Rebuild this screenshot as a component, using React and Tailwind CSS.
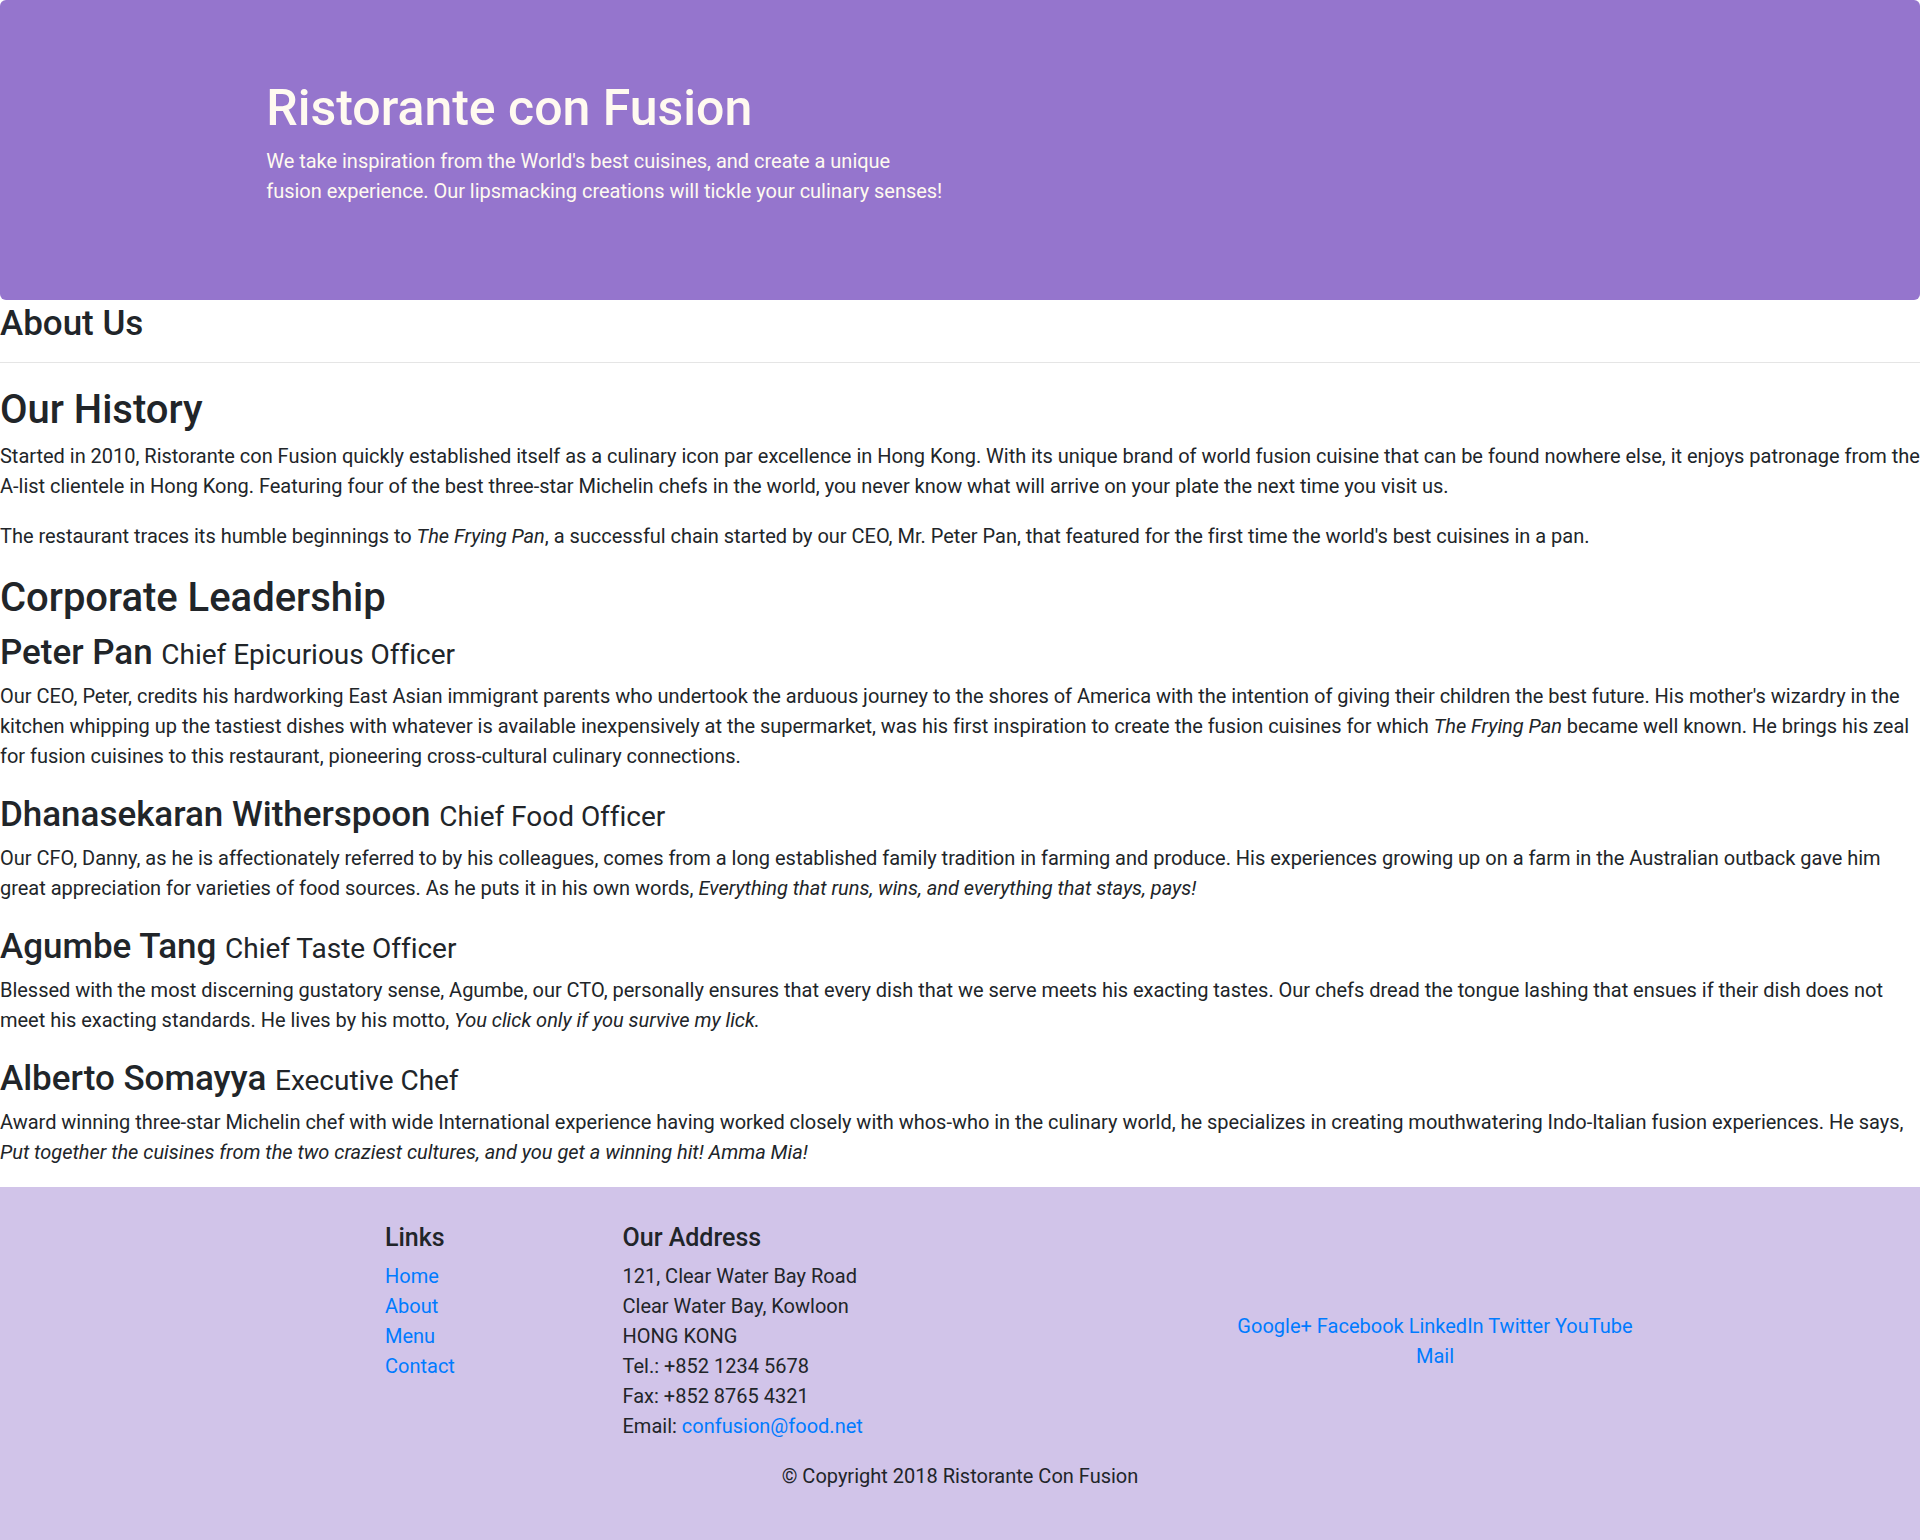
function Leader({ name, title, children }) {
  return (
    <>
      <h3 className="text-[35px] font-medium leading-[1.2] pt-[3px] mb-[7px]">
        {name} <small className="text-[28px] font-normal">{title}</small>
      </h3>
      <p className="mb-[20px]">{children}</p>
    </>
  );
}

export default function App() {
  return (
    <div className="font-['Roboto','Liberation_Sans',sans-serif] text-[20px] leading-[30px] text-[#212529] bg-white min-h-[1540px] flex flex-col">
      {/* Jumbotron */}
      <header className="bg-[#9575CD] text-[#FFFAF0] rounded-[6px] h-[300px] py-[75px]">
        <div className="w-[1425px] mx-auto px-[18.75px]">
          <div className="w-[712px]">
            <h1 className="text-[50px] font-medium leading-[60px] pt-[3px] mb-[7px]">Ristorante con Fusion</h1>
            <p className="tracking-[-0.02px] pt-[1px] whitespace-nowrap">
              We take inspiration from the World's best cuisines, and create a unique
              <br />
              fusion experience. Our lipsmacking creations will tickle your culinary senses!
            </p>
          </div>
        </div>
      </header>

      {/* Main */}
      <main className="tracking-[-0.02px]">
        <h3 className="text-[35px] font-medium leading-[42px] pt-[3px] -mb-[3px]">About Us</h3>
        <hr className="mt-[20px] mb-[20px] border-0 border-t border-black/10" />

        <h2 className="text-[40px] font-medium leading-[48px] pt-[3px] mb-[7px]">Our History</h2>
        <p className="mb-[20px]">
          Started in 2010, Ristorante con Fusion quickly established itself as a culinary icon par excellence in Hong Kong. With its unique brand of world fusion cuisine that can be found nowhere else, it enjoys patronage from the A-list clientele in Hong Kong. Featuring four of the best three-star Michelin chefs in the world, you never know what will arrive on your plate the next time you visit us.
        </p>
        <p className="mb-[20px]">
          The restaurant traces its humble beginnings to <em>The Frying Pan</em>, a successful chain started by our CEO, Mr. Peter Pan, that featured for the first time the world's best cuisines in a pan.
        </p>

        <h2 className="text-[40px] font-medium leading-[48px] pt-[3px] mb-[7px]">Corporate Leadership</h2>
        <Leader name="Peter Pan" title="Chief Epicurious Officer">
          Our CEO, Peter, credits his hardworking East Asian immigrant parents who undertook the arduous journey to the shores of America with the intention of giving their children the best future. His mother's wizardry in the kitchen whipping up the tastiest dishes with whatever is available inexpensively at the supermarket, was his first inspiration to create the fusion cuisines for which <em>The Frying Pan</em> became well known. He brings his zeal for fusion cuisines to this restaurant, pioneering cross-cultural culinary connections.
        </Leader>
        <Leader name="Dhanasekaran Witherspoon" title="Chief Food Officer">
          Our CFO, Danny, as he is affectionately referred to by his colleagues, comes from a long established family tradition in farming and produce. His experiences growing up on a farm in the Australian outback gave him great appreciation for varieties of food sources. As he puts it in his own words, <em>Everything that runs, wins, and everything that stays, pays!</em>
        </Leader>
        <Leader name="Agumbe Tang" title="Chief Taste Officer">
          Blessed with the most discerning gustatory sense, Agumbe, our CTO, personally ensures that every dish that we serve meets his exacting tastes. Our chefs dread the tongue lashing that ensues if their dish does not meet his exacting standards. He lives by his motto, <em>You click only if you survive my lick.</em>
        </Leader>
        <Leader name="Alberto Somayya" title="Executive Chef">
          Award winning three-star Michelin chef with wide International experience having worked closely with whos-who in the culinary world, he specializes in creating mouthwatering Indo-Italian fusion experiences. He says, <em>Put together the cuisines from the two craziest cultures, and you get a winning hit! Amma Mia!</em>
        </Leader>
      </main>

      {/* Footer */}
      <footer className="bg-[#D1C4E9] flex-1 pt-[34px] pb-[30px]">
        <div className="w-[1425px] mx-auto">
          <div className="grid grid-cols-12">
            <div className="col-start-2 col-span-2 px-[18.75px]">
              <h5 className="text-[25px] font-medium leading-[30px] pt-[2px] mb-[8px]">Links</h5>
              <ul>
                <li><a href="#" className="text-[#007bff]">Home</a></li>
                <li><a href="#" className="text-[#007bff]">About</a></li>
                <li><a href="#" className="text-[#007bff]">Menu</a></li>
                <li><a href="#" className="text-[#007bff]">Contact</a></li>
              </ul>
            </div>
            <div className="col-span-5 px-[18.75px]">
              <h5 className="text-[25px] font-medium leading-[30px] pt-[2px] mb-[8px]">Our Address</h5>
              <address className="not-italic mb-[20px]">
                121, Clear Water Bay Road<br />
                Clear Water Bay, Kowloon<br />
                HONG KONG<br />
                Tel.: +852 1234 5678<br />
                Fax: +852 8765 4321<br />
                Email: <a href="#" className="text-[#007bff]">confusion@food.net</a>
              </address>
            </div>
            <div className="col-span-4 px-[18.75px] self-center text-center">
              <div className="text-[#007bff]">
                <div>
                  <a href="#">Google+</a> <a href="#">Facebook</a> <a href="#">LinkedIn</a> <a href="#">Twitter</a> <a href="#">YouTube</a>
                </div>
                <div>
                  <a href="#">Mail</a>
                </div>
              </div>
            </div>
          </div>
          <div className="flex justify-center">
            <p className="mb-[20px]">© Copyright 2018 Ristorante Con Fusion</p>
          </div>
        </div>
      </footer>
    </div>
  );
}
